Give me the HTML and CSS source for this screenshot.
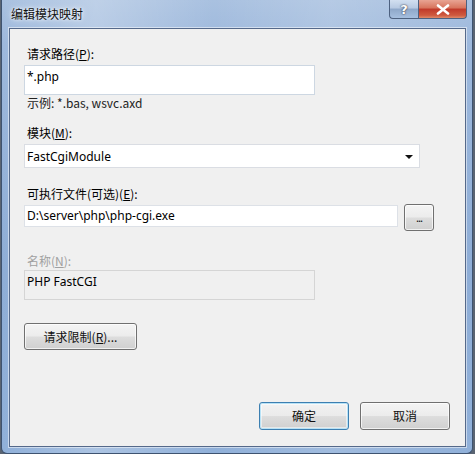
FILE: index.html
```html
<!DOCTYPE html>
<html lang="zh-CN">
<head>
<meta charset="utf-8">
<title>编辑模块映射</title>
<link rel="stylesheet" href="styles.css">
</head>
<body>
<div class="window">
  <div class="titlebar">
    <span class="title">编辑模块映射</span>
    <div class="caption-btns">
      <div class="cap help">?</div>
      <div class="cap close">
        <svg width="14" height="11" viewBox="0 0 14 11"><path d="M2 1.5 L12 9.5 M12 1.5 L2 9.5" stroke="#fff" stroke-width="2.6" stroke-linecap="round"/></svg>
      </div>
    </div>
  </div>
  <div class="client">
    <div class="label l1">请求路径(<u>P</u>):</div>
    <div class="textbox tb1">*.php</div>
    <div class="hint">示例: *.bas, wsvc.axd</div>
    <div class="label l2">模块(<u>M</u>):</div>
    <div class="combo"><span>FastCgiModule</span><span class="arrow"></span></div>
    <div class="label l3">可执行文件(可选)(<u>E</u>):</div>
    <div class="row">
      <div class="textbox tb3">D:\server\php\php-cgi.exe</div>
      <div class="btn browse">...</div>
    </div>
    <div class="label disabled l4">名称(<u>N</u>):</div>
    <div class="textbox tb4">PHP FastCGI</div>
    <div class="btn restrict">请求限制(<u>R</u>)...</div>
    <div class="footer">
      <div class="btn default">确定</div>
      <div class="btn cancel">取消</div>
    </div>
  </div>
</div>
</body>
</html>
```
FILE: styles.css
```css
html, body {
  margin: 0;
  padding: 0;
}
body {
  width: 475px;
  height: 454px;
  background: #5a6472;
  font-family: "Segoe UI", "Noto Sans", "Noto Sans CJK SC", sans-serif;
  font-size: 12px;
  color: #000;
  overflow: hidden;
}
.window {
  margin-left: 1px;
  width: 472px;
  height: 454px;
  box-sizing: border-box;
  border: 1px solid #3e5370;
  border-top: none;
  border-radius: 0 0 6px 6px;
  background:
    linear-gradient(to right, rgba(255,255,255,0.0) 0%, rgba(255,255,255,0.25) 20%, rgba(255,255,255,0) 45%, rgba(255,255,255,0.15) 70%, rgba(255,255,255,0) 100%),
    linear-gradient(to bottom, #a9c1e0 0%, #9db8dc 10%, #8eadd6 60%, #90b0d9 100%);
  padding: 0 6px 6px 7px;
  display: flex;
  flex-direction: column;
}
.titlebar {
  height: 28px;
  display: flex;
  justify-content: space-between;
  align-items: flex-start;
}
.title {
  margin-top: 6px;
  margin-left: 2px;
  font-family: "Noto Sans CJK SC", sans-serif;
  font-size: 12px;
  line-height: 16px;
  color: #111;
  text-shadow: 0 0 6px rgba(255,255,255,0.9), 0 0 3px rgba(255,255,255,0.9);
}
.caption-btns {
  display: flex;
  margin-right: -1px;
}
.cap {
  height: 19px;
  box-sizing: border-box;
  border: 1px solid #4d6180;
  border-top: none;
  display: flex;
  align-items: center;
  justify-content: center;
}
.help {
  width: 29px;
  border-radius: 0 0 0 4px;
  border-right: none;
  background: linear-gradient(to bottom, #d2dff0 0%, #b7c9e2 45%, #8ea7c9 50%, #a6bfdf 100%);
  color: #fff;
  font-family: "DejaVu Sans", sans-serif;
  font-weight: bold;
  font-size: 13px;
  line-height: 13px;
  text-shadow: 0 0 2px #445, 0 0 1px #334;
}
.close {
  width: 49px;
  border-radius: 0 0 4px 0;
  background: linear-gradient(to bottom, #e8a493 0%, #d7735c 45%, #c0392a 50%, #cf5a3f 85%, #df8a6a 100%);
}
.client {
  flex: 1;
  background: #f0f0f0;
  border: 1px solid #55698a;
  box-shadow: 0 0 0 1px rgba(255,255,255,0.5);
  padding: 0 0 0 14px;
  display: flex;
  flex-direction: column;
  align-items: flex-start;
}
.label {
  line-height: 16px;
  padding-left: 3px;
  font-family: "Noto Sans CJK SC", sans-serif;
}
.label u, .btn u { text-decoration: underline; }
.l1 { margin-top: 17px; }
.l2 { margin-top: 15px; }
.l3 { margin-top: 18px; }
.l4 { margin-top: 22px; }
.disabled { color: #a0a0a0; }
.textbox {
  box-sizing: border-box;
  background: #fff;
  border: 1px solid #e2e3ea;
  border-top-color: #abadb3;
  padding: 4px 2px;
  line-height: 16px;
  white-space: nowrap;
}
.tb1 {
  margin-top: 3px;
  width: 291px;
  height: 30px;
  border-color: #cdd7e2;
  padding-top: 3px;
}
.hint {
  margin-top: 1px;
  line-height: 14px;
  padding-left: 3px;
  font-family: "Noto Sans CJK SC", sans-serif;
  color: #222;
}
.combo {
  margin-top: 3px;
  width: 396px;
  height: 24px;
  box-sizing: border-box;
  background: #fff;
  border: 1px solid #dadde3;
  display: flex;
  align-items: center;
  justify-content: space-between;
  padding: 0 6px 0 2px;
}
.arrow {
  width: 0;
  height: 0;
  border-left: 4px solid transparent;
  border-right: 4px solid transparent;
  border-top: 4px solid #111;
  margin-top: 2px;
}
.row {
  margin-top: 2px;
  display: flex;
  align-items: flex-start;
  gap: 6px;
}
.tb3 {
  margin-top: 1px;
  width: 374px;
  height: 22px;
  padding: 2px 2px;
  border-color: #dde1e7;
}
.tb4 {
  margin-top: 1px;
  width: 291px;
  height: 30px;
  background: #f0f0f0;
  border: 1px solid #d5d5d5;
  padding-top: 3px;
}
.btn {
  box-sizing: border-box;
  border: 1px solid #707070;
  border-radius: 3px;
  background: linear-gradient(to bottom, #f4f4f4 0%, #ececec 48%, #dddddd 52%, #d0d0d0 100%);
  box-shadow: inset 0 0 0 1px rgba(255,255,255,0.7);
  display: flex;
  align-items: center;
  justify-content: center;
  font-family: "Noto Sans CJK SC", sans-serif;
  line-height: 16px;
  color: #111;
}
.browse {
  width: 30px;
  height: 27px;
  font-size: 11px;
  padding-bottom: 2px;
  letter-spacing: -1px;
}
.restrict {
  margin-top: 23px;
  width: 113px;
  height: 27px;
}
.footer {
  margin-top: auto;
  margin-bottom: 16px;
  align-self: stretch;
  display: flex;
  justify-content: flex-end;
  gap: 11px;
  padding-right: 15px;
}
.footer .btn {
  width: 90px;
  height: 28px;
}
.default {
  border-color: #3c7fb1;
  box-shadow: inset 0 0 0 1px #b8e2f6, inset 0 0 0 2px rgba(255,255,255,0.5);
  background: linear-gradient(to bottom, #eaf6fd 0%, #d9f0fc 48%, #bee6fd 52%, #a7d9f5 100%);
  background: linear-gradient(to bottom, #f2f2f2 0%, #ebebeb 48%, #dddddd 52%, #cfcfcf 100%);
}
```
